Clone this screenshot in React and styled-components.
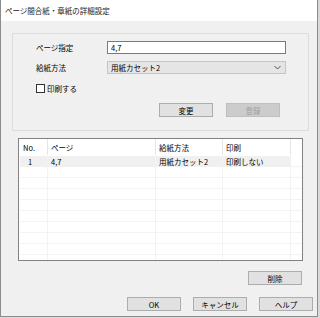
import React from 'react';
import styled, { createGlobalStyle } from 'styled-components';

const GlobalStyle = createGlobalStyle`
  html, body {
    margin: 0;
    padding: 0;
    background: #d9d9d9;
  }
  body {
    font-family: "Noto Sans CJK JP", "Noto Sans", sans-serif;
    font-size: 7.5px;
    color: #000;
  }
`;

const Window = styled.div`
  width: 318px;
  height: 317px;
  box-sizing: border-box;
  border: 1px solid #8c8c8c;
  border-top: none;
  background: #f0f0f0;
  display: flex;
  flex-direction: column;
`;

const TitleBar = styled.div`
  height: 21px;
  flex: none;
  background: #fff;
  display: flex;
  align-items: center;
  padding-left: 4px;
  font-size: 7.5px;
  color: #1a1a1a;
`;

const Body = styled.div`
  flex: 1;
  display: flex;
  flex-direction: column;
  padding: 12px 0 0 11px;
`;

const GroupBox = styled.div`
  width: 297px;
  height: 98px;
  box-sizing: border-box;
  border: 1px solid #dcdcdc;
  padding: 7px 0 0 23px;
  display: flex;
  flex-direction: column;
`;

const FieldRow = styled.div`
  display: flex;
  align-items: center;
  height: 13px;
  margin-bottom: ${(p) => p.gap || 0}px;
`;

const Label = styled.div`
  width: 71px;
  flex: none;
`;

const TextInput = styled.div`
  width: 179px;
  height: 13px;
  box-sizing: border-box;
  border: 1px solid #7a7a7a;
  background: #fff;
  padding-left: 3px;
  display: flex;
  align-items: center;
`;

const Select = styled(TextInput)`
  background: #e5e5e5;
  border-color: #c4c4c4;
  justify-content: space-between;
  padding-right: 4px;
`;

const CheckRow = styled.label`
  display: flex;
  align-items: center;
  height: 10px;
  margin-top: 9px;
  gap: 2px;
`;

const CheckBox = styled.span`
  width: 9px;
  height: 9px;
  box-sizing: border-box;
  border: 1px solid #333;
  background: #fff;
`;

const ButtonRow = styled.div`
  display: flex;
  justify-content: ${(p) => p.align || 'flex-end'};
  gap: ${(p) => p.gap || 12}px;
  padding-right: ${(p) => p.right || 0}px;
  margin-top: ${(p) => p.top || 0}px;
`;

const Button = styled.div`
  width: 54px;
  height: 14px;
  box-sizing: border-box;
  border: 1px solid ${(p) => (p.disabled ? '#bfbfbf' : '#adadad')};
  background: ${(p) => (p.disabled ? '#cccccc' : '#e1e1e1')};
  color: ${(p) => (p.disabled ? '#a0a0a0' : '#000')};
  display: flex;
  align-items: center;
  justify-content: center;
`;

const List = styled.div`
  margin: 7px 0 0 6px;
  width: 285px;
  height: 123px;
  box-sizing: border-box;
  border: 1px solid #828282;
  background: #fff;
  overflow: hidden;
  padding-left: 1px;
`;

const Row = styled.div`
  display: grid;
  grid-template-columns: 28px 108px 67px 68px 11px;
  height: ${(p) => (p.header ? 17 : 11)}px;
  box-sizing: border-box;
  border-bottom: 1px solid ${(p) => (p.header ? 'transparent' : '#f3f3f3')};
`;

const Cell = styled.div`
  display: flex;
  align-items: center;
  padding-left: ${(p) => p.pad ?? 3}px;
  white-space: nowrap;
  border-right: 1px solid ${(p) => (p.header ? '#e5e5e5' : '#f3f3f3')};
  background: ${(p) => (p.selected ? '#f0f0f0' : 'transparent')};
  &:last-child {
    border-right: none;
    background: transparent;
  }
`;

const Chevron = () => (
  <svg width="7" height="5" viewBox="0 0 7 5">
    <path d="M0.5 1 L3.5 4 L6.5 1" fill="none" stroke="#444" strokeWidth="0.9" />
  </svg>
);

const columns = ['No.', 'ページ', '給紙方法', '印刷', ''];
const rows = [['1', '4,7', '用紙カセット2', '印刷しない', '']];

export default function App() {
  const empty = Array.from({ length: 9 });
  return (
    <>
      <GlobalStyle />
      <Window>
        <TitleBar>ページ間合紙・章紙の詳細設定</TitleBar>
        <Body>
          <GroupBox>
            <FieldRow gap={7}>
              <Label>ページ指定</Label>
              <TextInput>4,7</TextInput>
            </FieldRow>
            <FieldRow>
              <Label>給紙方法</Label>
              <Select>
                <span>用紙カセット2</span>
                <Chevron />
              </Select>
            </FieldRow>
            <CheckRow>
              <CheckBox />
              <span>印刷する</span>
            </CheckRow>
            <ButtonRow gap={13} right={28} top={10}>
              <Button>変更</Button>
              <Button disabled>登録</Button>
            </ButtonRow>
          </GroupBox>
          <List>
            <Row header>
              {columns.map((c, i) => (
                <Cell header key={i} pad={i === 0 ? 3 : 3}>
                  {c}
                </Cell>
              ))}
            </Row>
            {rows.map((r, ri) => (
              <Row key={ri}>
                {r.map((c, i) => (
                  <Cell selected key={i} pad={i === 0 ? 8 : 3}>
                    {c}
                  </Cell>
                ))}
              </Row>
            ))}
            {empty.map((_, ri) => (
              <Row key={'e' + ri}>
                {columns.map((_, i) => (
                  <Cell key={i} />
                ))}
              </Row>
            ))}
          </List>
          <ButtonRow right={15} top={10}>
            <Button>削除</Button>
          </ButtonRow>
          <ButtonRow right={4} top={12}>
            <Button>OK</Button>
            <Button>キャンセル</Button>
            <Button>ヘルプ</Button>
          </ButtonRow>
        </Body>
      </Window>
    </>
  );
}
